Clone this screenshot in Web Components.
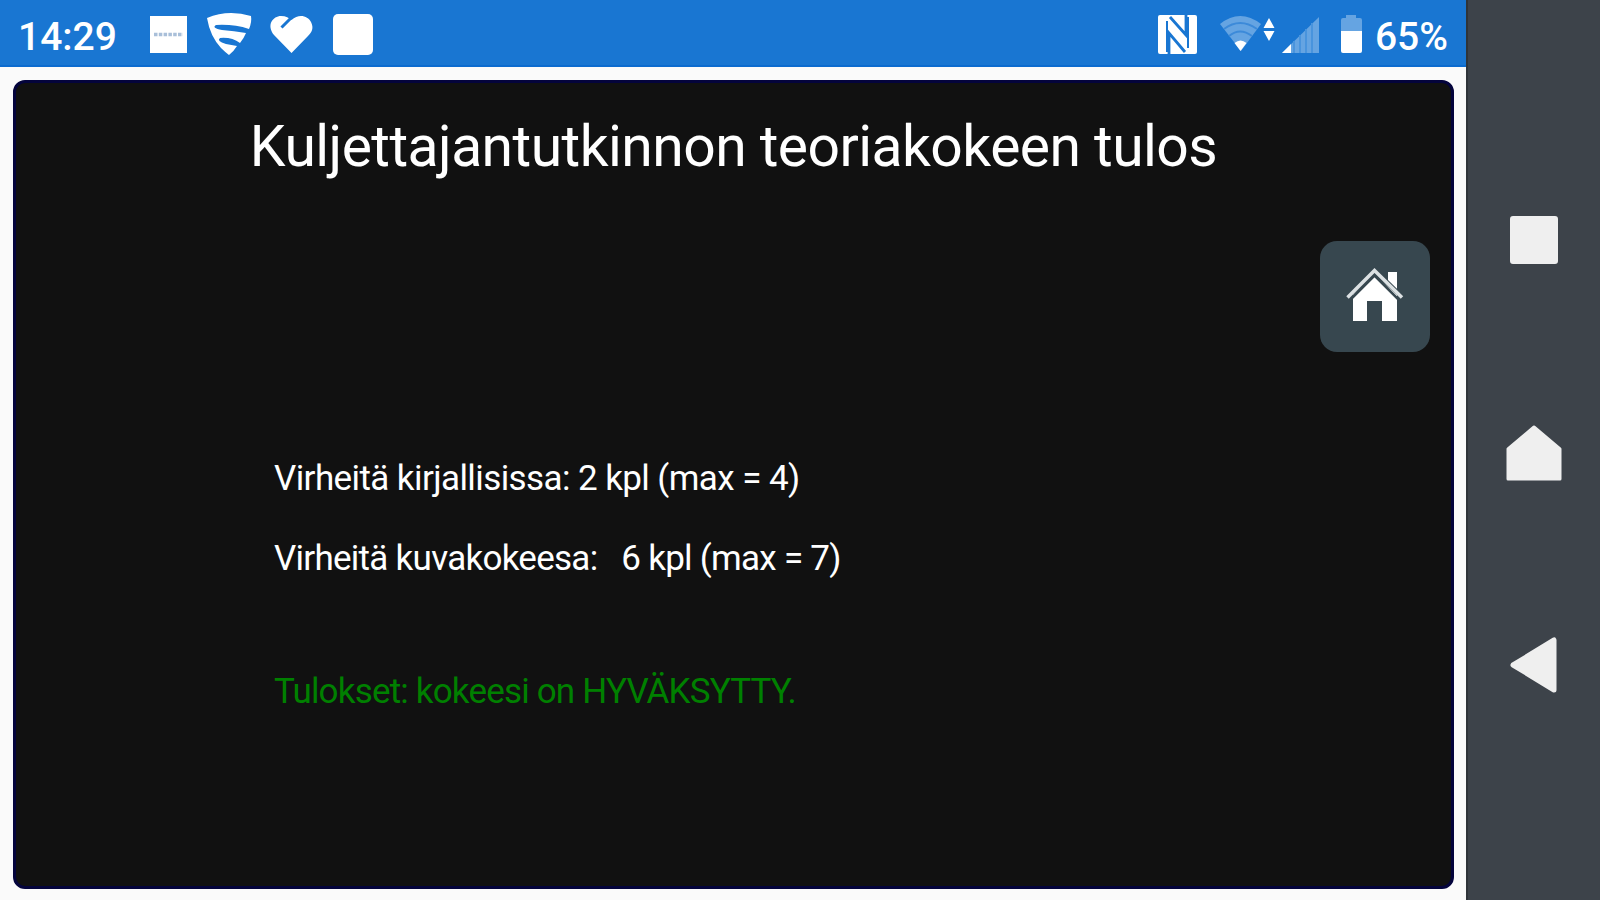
<!DOCTYPE html>
<html lang="fi">
<head>
<meta charset="utf-8">
<title>Teoriakoe</title>
<style>
	html, body {
		margin: 0;
		height: 100%;
		overflow: hidden;
		font-family: Roboto, "Liberation Sans", sans-serif;
	}
</style>
</head>
<body>
<phone-screen>
	<status-bar slot="status" time="14:29" battery="65%"></status-bar>
	<result-card>
		<span slot="title">Kuljettajantutkinnon teoriakokeen tulos</span>
		<home-button slot="action"></home-button>
		<result-line style="--spacing: -0.59px">Virheitä kirjallisissa: 2 kpl (max = 4)</result-line>
		<result-line style="--spacing: -0.73px">Virheitä kuvakokeesa: &nbsp; 6 kpl (max = 7)</result-line>
		<result-line passed style="--spacing: -0.82px">Tulokset: kokeesi on HYVÄKSYTTY.</result-line>
	</result-card>
	<nav-bar slot="nav"></nav-bar>
</phone-screen>
<script>
(function()  {
	function define(name, html, init) {
		let template = document.createElement("template");
		template.innerHTML = html;
		customElements.define(name, class extends HTMLElement {
			constructor() {
				super();
				this._shadowRoot = this.attachShadow({mode: "open"});
				this._shadowRoot.appendChild(template.content.cloneNode(true));
			}

			connectedCallback() {
				if (init) init(this, this._shadowRoot);
			}
		});
	}

	define("phone-screen", `
		<style>
			:host {
				display: grid;
				grid-template-columns: 1466px 1fr;
				width: 1600px;
				height: 900px;
				background: #fafafa;
			}
			.app {
				display: flex;
				flex-direction: column;
			}
		</style>
		<div class="app">
			<slot name="status"></slot>
			<slot></slot>
		</div>
		<slot name="nav"></slot>
	`);

	define("status-bar", `
		<style>
			:host {
				display: flex;
				box-sizing: border-box;
				height: 67px;
				background: #1976d2;
				border-bottom: 2px solid #0c6bcf;
				color: #fff;
				font-size: 39px;
				font-weight: 500;
				line-height: 74px;
			}
			#time { width: 149px; padding-left: 18px; box-sizing: border-box; }
			#battery { width: 91px; margin-left: 12px; letter-spacing: -0.1px; }
			svg { display: block; flex: none; }
			.space { flex: 1; }
		</style>
		<span id="time"></span>
		<svg width="226" height="65" viewBox="149 0 226 65" fill="#fff">
			<rect x="150" y="16" width="37" height="37"/>
			<path d="M154 34.500H183" stroke="#a9bfd9" stroke-width="3.500" stroke-dasharray="3.500 1.300"/>
			<path d="M207 18Q228 9 251 16Q252 22 249 29Q234 24 216 25Q211 28 222 30Q234 31 246 33Q244 38 240 43Q232 37 220 38Q216 41 226 44L237 46Q234 51 229 55Q225 52 221 48Q210 36 207 18Z"/>
			<path d="M291.500 53L274 35C266 25 273 16 281 16C286 16 289 18 291.500 20C299 13 308 16 311 22C314 28 312 32 308 36Z"/>
			<path d="M281.500 27.500L290.500 18.500" stroke="#1976d2" stroke-width="3"/>
			<rect x="333" y="14" width="40" height="41" rx="5"/>
		</svg>
		<span class="space"></span>
		<svg width="206" height="65" viewBox="1157 0 206 65" fill="#fff">
			<rect x="1158" y="15" width="39" height="39" rx="2"/>
			<path d="M1170 17L1186 35V15M1185 52L1169 33V54" stroke="#1976d2" stroke-width="2.800" fill="none"/>
			<path d="M1167 21V52M1188 17V48" stroke="#1976d2" stroke-width="2" fill="none"/>
			<path d="M1220 24Q1240 8 1261 24L1241 51Z" fill="#65a4e2"/>
			<path d="M1224 29Q1240 17 1257 29M1229 36Q1240 27 1252 36" fill="none" stroke="#3c8ad9" stroke-width="2"/>
			<path d="M1234.500 43Q1240.500 38 1246.500 43L1240.500 51Z"/>
			<path d="M1263.500 28L1269 18L1274.500 28ZM1263.500 31H1274.500L1269 41Z"/>
			<path d="M1282 53L1319 17V53Z" fill="#65a4e2"/>
			<path d="M1294 41V53M1300 35V53M1306 29V53M1312 23V53" stroke="#4994dd" stroke-width="2"/>
			<path d="M1282 53L1291 44V53Z"/>
			<path d="M1341 31V20Q1341 18 1343 18H1346V15H1356V18H1360Q1362 18 1362 20V31Z" fill="#65a4e2"/>
			<path d="M1341 31H1362V51Q1362 53 1360 53H1343Q1341 53 1341 51Z"/>
		</svg>
		<span id="battery"></span>
	`, (el, root) => {
		root.getElementById("time").textContent = el.getAttribute("time");
		root.getElementById("battery").textContent = el.getAttribute("battery");
	});

	define("result-card", `
		<style>
			:host {
				display: flex;
				flex-direction: column;
				box-sizing: border-box;
				height: 809px;
				margin: 13px 12px 0 13px;
				border: 3px solid #04043c;
				border-radius: 12px;
				background: #111;
				color: #fff;
			}
			h1 {
				margin: 30px 0 0 0;
				font-size: 57px;
				font-weight: 400;
				line-height: 68px;
				letter-spacing: -0.54px;
				text-align: center;
				white-space: nowrap;
			}
			.action {
				display: flex;
				justify-content: flex-end;
				padding: 60px 21px 0 0;
			}
			.lines {
				margin: 87px 0 0 258px;
			}
		</style>
		<h1><slot name="title"></slot></h1>
		<div class="action"><slot name="action"></slot></div>
		<div class="lines"><slot></slot></div>
	`);

	define("home-button", `
		<style>
			:host {
				display: block;
				width: 110px;
				height: 111px;
				border-radius: 17px;
				background: #37474f;
			}
			svg { display: block; }
		</style>
		<svg width="110" height="111" viewBox="1320 241 110 111">
			<path d="M1388 286V272H1397V295Z" fill="#fff"/>
			<path d="M1347.500 298L1374.500 271L1402 298" fill="none" stroke="#37474f" stroke-width="6"/>
			<path d="M1353 321V295L1375 275.500L1397 295V321H1382V301H1367V321Z" fill="#fff"/>
			<path d="M1350 300L1374.500 275.500L1399 300" fill="none" stroke="#37474f" stroke-width="2.500"/>
			<path d="M1347.500 297.500L1374.500 270.500L1402 297.500" fill="none" stroke="#dce1e3" stroke-width="3.500"/>
		</svg>
	`);

	define("result-line", `
		<style>
			:host {
				display: block;
				height: 80px;
				font-size: 35px;
				line-height: 80px;
				letter-spacing: var(--spacing);
				white-space: nowrap;
			}
			:host([passed]) {
				margin-top: 53px;
				color: #008000;
			}
		</style>
		<slot></slot>
	`);

	define("nav-bar", `
		<style>
			:host {
				display: flex;
				flex-direction: column;
				align-items: center;
				box-sizing: border-box;
				border-left: 2px solid #2f3439;
				background: #3d434a;
				padding: 216px 1px 0 0;
				gap: 157px;
			}
			svg { display: block; fill: #efefef; stroke: #efefef; stroke-linejoin: round; }
		</style>
		<svg width="48" height="48"><rect x="3" y="3" width="42" height="42" stroke-width="6"/></svg>
		<svg style="margin-top: 4px" width="56" height="56"><path d="M2 24L28 2L54 24V54H2Z" stroke-width="3"/></svg>
		<svg style="margin-top: -1px" width="48" height="56"><path d="M3 28L44 3V53Z" stroke-width="5"/></svg>
	`);
})();
</script>
</body>
</html>
